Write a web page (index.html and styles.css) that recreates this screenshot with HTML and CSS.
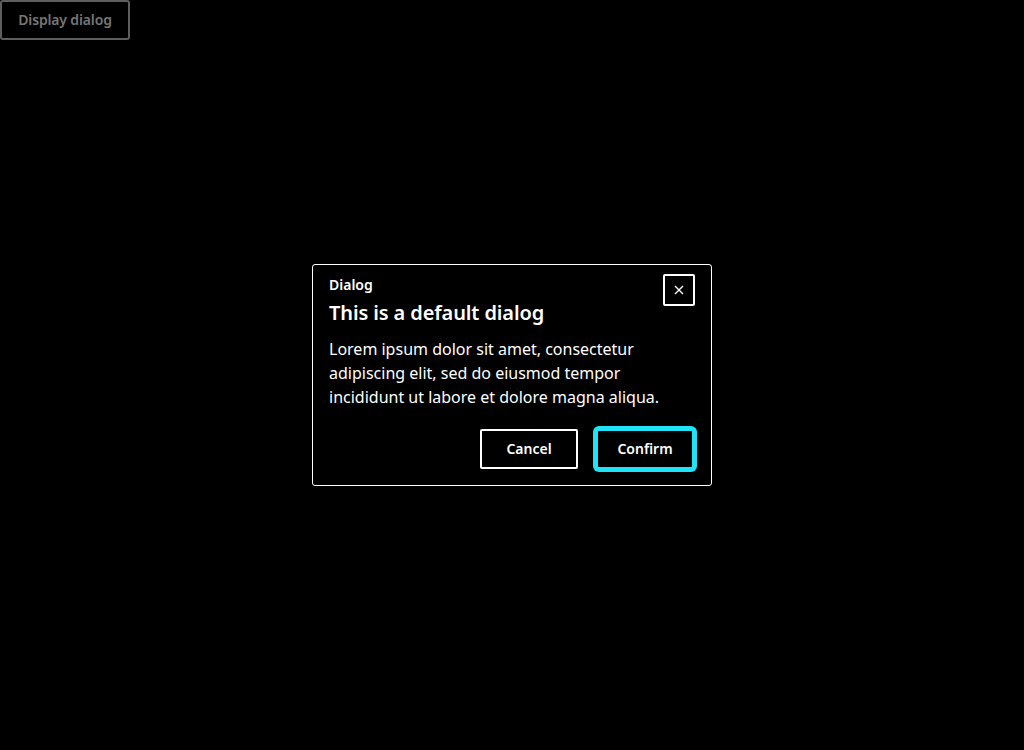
FILE: index.html
```html
<!DOCTYPE html>
<html lang="en">
<head>
<meta charset="utf-8">
<title>Dialog</title>
<link rel="stylesheet" href="styles.css">
</head>
<body>
<button class="trigger" type="button">Display dialog</button>
<div class="stage">
  <div class="dialog" role="dialog" aria-labelledby="dlg-title">
    <div class="dialog-header">
      <div class="dialog-heading">
        <div class="dialog-label">Dialog</div>
        <h2 class="dialog-title" id="dlg-title">This is a default dialog</h2>
      </div>
      <button class="dialog-close" type="button" aria-label="Close">
        <svg width="10" height="10" viewBox="0 0 10 10" aria-hidden="true"><path d="M1 1L9 9M9 1L1 9" stroke="#fff" stroke-width="1.4" fill="none"/></svg>
      </button>
    </div>
    <p class="dialog-body">Lorem ipsum dolor sit amet, consectetur adipiscing elit, sed do eiusmod tempor incididunt ut labore et dolore magna aliqua.</p>
    <div class="dialog-actions">
      <button class="btn" type="button">Cancel</button>
      <button class="btn btn-focus" type="button">Confirm</button>
    </div>
  </div>
</div>
</body>
</html>
```
FILE: styles.css
```css
html, body {
  margin: 0;
  padding: 0;
  background: #000;
  height: 100%;
}
body {
  font-family: "Noto Sans", "Open Sans", sans-serif;
  color: #fff;
  position: relative;
}
.trigger {
  display: block;
  width: 130px;
  height: 40px;
  margin: 0;
  padding: 0 0 2px 0;
  background: #000;
  border: 2px solid #5e5e5e;
  border-radius: 3px;
  color: #767676;
  font-family: inherit;
  font-size: 14px;
  font-weight: 600;
  letter-spacing: -0.15px;
}
.stage {
  position: absolute;
  inset: 0;
  display: flex;
  align-items: center;
  justify-content: center;
}
.dialog {
  box-sizing: border-box;
  width: 400px;
  border: 1px solid #fff;
  border-radius: 3px;
  background: #000;
  padding: 10px 16px 16px 16px;
  display: flex;
  flex-direction: column;
}
.dialog-header {
  display: flex;
  justify-content: space-between;
  align-items: flex-start;
}
.dialog-label {
  font-size: 14px;
  font-weight: 600;
  line-height: 20px;
}
.dialog-title {
  margin: 4px 0 0 0;
  font-size: 20px;
  font-weight: 600;
  line-height: 28px;
  letter-spacing: -0.12px;
}
.dialog-close {
  box-sizing: border-box;
  width: 32px;
  height: 32px;
  margin: -1px 0 0 0;
  padding: 0;
  background: #000;
  border: 2px solid #fff;
  border-radius: 2px;
  display: flex;
  align-items: center;
  justify-content: center;
}
.dialog-body {
  margin: 10px 0 0 0;
  font-size: 16px;
  line-height: 24px;
}
.dialog-actions {
  display: flex;
  justify-content: flex-end;
  gap: 18px;
  margin-top: 20px;
  padding-right: 1px;
}
.btn {
  box-sizing: border-box;
  width: 98px;
  height: 40px;
  margin: 0;
  padding: 0 0 1px 0;
  background: #000;
  border: 2px solid #fff;
  border-radius: 2px;
  color: #fff;
  font-family: inherit;
  font-size: 14px;
  font-weight: 600;
}
.btn-focus {
  border-color: #1fe3f8;
  box-shadow: 0 0 0 3px #1fe3f8;
  border-radius: 3px;
}
```
